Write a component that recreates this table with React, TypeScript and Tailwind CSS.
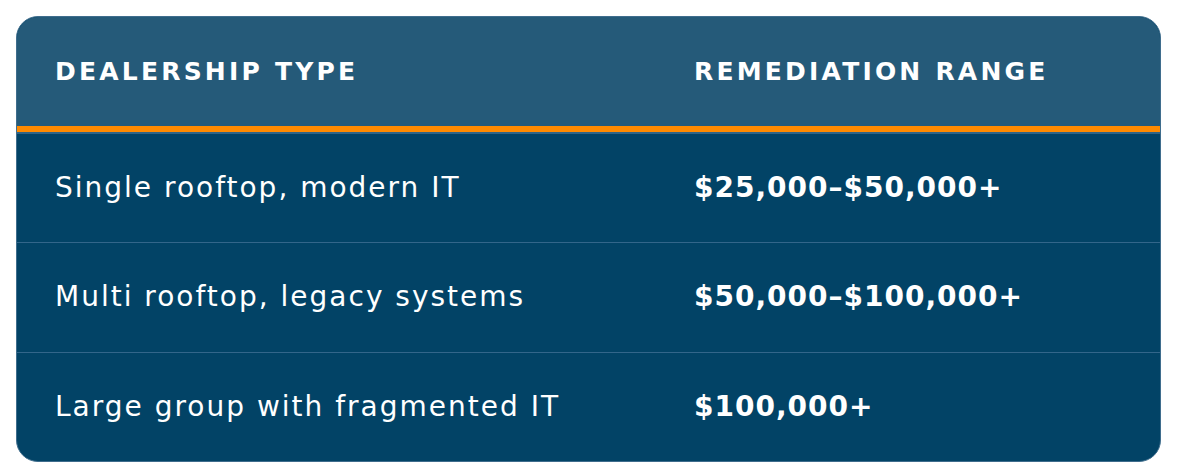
export default function App() {
  const rows = [
    ["Single rooftop, modern IT", "$25,000–$50,000+"],
    ["Multi rooftop, legacy systems", "$50,000–$100,000+"],
    ["Large group with fragmented IT", "$100,000+"],
  ];
  return (
    <div className="w-[1178px] h-[474px] bg-white p-[16px]" style={{ fontFamily: '"DejaVu Sans", "Liberation Sans", sans-serif' }}>
      <div className="w-[1145px] h-[446px] rounded-[22px] border border-[#3f6d8d] overflow-hidden bg-[#024366] flex flex-col">
        <div className="h-[109px] shrink-0 bg-[#255a79] grid grid-cols-[677px_1fr] items-center text-white font-bold text-[25px] tracking-[3.2px]">
          <div className="pl-[38px] whitespace-nowrap">DEALERSHIP TYPE</div>
          <div className="whitespace-nowrap">REMEDIATION RANGE</div>
        </div>
        <div className="h-[6px] shrink-0 bg-[#ff8a00]" />
        <div className="h-[2px] shrink-0 bg-[#2f6486]" />
        {rows.map((r, i) => (
          <div key={i} className={`flex-1 grid grid-cols-[677px_1fr] items-center text-white ${i < 2 ? "border-b border-[#33668a]" : ""}`}>
            <div className="pl-[38px] text-[28px] tracking-[2px] whitespace-nowrap">{r[0]}</div>
            <div className="text-[28px] font-bold tracking-[1px] whitespace-nowrap">{r[1]}</div>
          </div>
        ))}
      </div>
    </div>
  );
}
